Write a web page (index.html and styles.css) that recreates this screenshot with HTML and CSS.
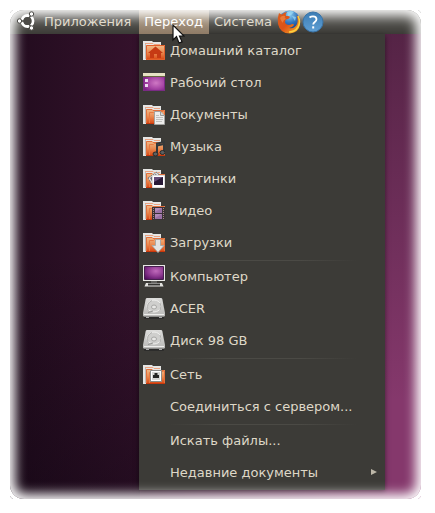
FILE: index.html
```html
<!DOCTYPE html>
<html lang="ru">
  <head>
    <meta charset="UTF-8">
    <meta name="viewport" content="width=device-width, initial-scale=1.0">
    <title>Переход</title>
    <link rel="stylesheet" href="styles.css">
  </head>
  <body>
    <!-- shared icon parts -->
    <svg class="defs" width="0" height="0" aria-hidden="true">
      <defs>
        <linearGradient id="orange" x1="0" y1="0" x2="0" y2="1">
          <stop offset="0" stop-color="#f0bd8c"/>
          <stop offset="0.5" stop-color="#ea8a50"/>
          <stop offset="1" stop-color="#d8440f"/>
        </linearGradient>
        <linearGradient id="metal" x1="0" y1="0" x2="0" y2="1">
          <stop offset="0" stop-color="#dcdcda"/>
          <stop offset="1" stop-color="#b9b9b7"/>
        </linearGradient>
        <radialGradient id="violet" cx="0.6" cy="0.5" r="0.7">
          <stop offset="0" stop-color="#cf78c4"/>
          <stop offset="0.6" stop-color="#a544a4"/>
          <stop offset="1" stop-color="#7d2485"/>
        </radialGradient>
        <radialGradient id="screen" cx="0.6" cy="0.35" r="0.8">
          <stop offset="0" stop-color="#c06abb"/>
          <stop offset="0.5" stop-color="#8f3a92"/>
          <stop offset="1" stop-color="#4f0d5c"/>
        </radialGradient>
        <linearGradient id="help" x1="0" y1="0" x2="0" y2="1">
          <stop offset="0" stop-color="#3c7cb4"/>
          <stop offset="1" stop-color="#5f9fd4"/>
        </linearGradient>
        <linearGradient id="fox" x1="0" y1="0" x2="1" y2="1">
          <stop offset="0" stop-color="#d9601f"/>
          <stop offset="0.5" stop-color="#dd5216"/>
          <stop offset="1" stop-color="#f6b62a"/>
        </linearGradient>
        <radialGradient id="globe" cx="0.5" cy="0.2" r="0.8">
          <stop offset="0" stop-color="#8fd0f0"/>
          <stop offset="0.5" stop-color="#2f73bd"/>
          <stop offset="1" stop-color="#172f76"/>
        </radialGradient>
        <symbol id="sheets" viewBox="0 0 22 22">
          <path d="M0 2h9l1 1h8v4H3v14H0z" fill="#e6e6e4"/>
          <path d="M2 4.500h8l1 1h6" fill="none" stroke="#eba482"/>
          <path d="M2.500 5v15" stroke="#bdbdba"/>
        </symbol>
        <symbol id="folder" viewBox="0 0 22 22">
          <use href="#sheets"/>
          <path d="M3 6h6l1 1h12v14H3z" fill="url(#orange)"/>
          <path d="M3.500 21V6.500h5.500l1 1h11.500V21" fill="none" stroke="#e2703c"/>
          <path d="M6.500 20V9.500h4l1-1h9" fill="none" stroke="#e77b42"/>
          <path d="M3 20.500h19" stroke="#c9380c"/>
        </symbol>
        <symbol id="disk" viewBox="0 0 22 22">
          <path d="M1 19h20v2q0 1-1 1H2q-1 0-1-1z" fill="#2c2c2b"/>
          <path d="M4 1h14q1 0 1.300 1L22 16v2.500q0 1-1 1H1q-1 0-1-1V16L2.700 2Q3 1 4 1z" fill="url(#metal)"/>
          <path d="M1 17.500h20" stroke="#eeeeec"/>
          <path d="M1 19.500h20" stroke="#8c8c8a"/>
          <ellipse cx="11" cy="9" rx="7" ry="6" fill="#cfcfcd" stroke="#efefed"/>
          <path d="M5 13Q3 6 9 3.500M17 13q2-4 0-7" fill="none" stroke="#b0b0ae"/>
          <ellipse cx="11" cy="10" rx="2.500" ry="2" fill="#e8e8e6" stroke="#a7a7a5"/>
          <path d="M5 15.500l5-1.500" stroke="#949492"/>
          <path d="M3 20.500h3M16 20.500h3" stroke="#aaa"/>
        </symbol>
      </defs>
    </svg>

    <div class="desktop">
      <nav class="panel">
        <button class="panel-item first">
          <svg class="logo" viewBox="0 0 20 20" aria-hidden="true">
            <circle cx="10.500" cy="10" r="5.500" fill="none" stroke="#fff" stroke-width="2.800"/>
            <path d="M10.500 10L1 10M10.500 10l5-9M10.500 10l5 9" stroke="#4c4b47" stroke-width="1.500"/>
            <circle cx="10.500" cy="10" r="4" fill="#4c4b47"/>
            <g fill="#fff" stroke="#4c4b47" stroke-width="1">
              <circle cx="2.500" cy="10" r="2.200"/>
              <circle cx="14.500" cy="3" r="2.200"/>
              <circle cx="14.500" cy="17" r="2.200"/>
            </g>
          </svg>
          Приложения
        </button>
        <button class="panel-item active">Переход
          <svg class="cursor" viewBox="0 0 13 21" aria-hidden="true">
            <path d="M1 1v15l3.500-3.500L7 19l3-1.200L7.500 12H12z" fill="#fff" stroke="#111" stroke-width="1.200"/>
          </svg>
        </button>
        <button class="panel-item">Система</button>
        <button class="launcher" aria-label="Firefox">
          <svg viewBox="0 0 24 24" aria-hidden="true">
            <circle cx="12.500" cy="11" r="10.500" fill="url(#globe)"/>
            <path d="M10 2q4-2 7 0l-3 3-3 1zM15 6l4 1-1 4z" fill="#9fdcf4" fill-opacity="0.700"/>
            <path d="M2 3q1 1 3 1.500Q7 2 10 2 8 4 9 6q3-.5 4 1-1 2-4 2.500Q7 12 9 14q3 2 6 0 2 0 2 1-2 3-5 3 6 1 8-4 1.500-4-.5-9 4 4 3.500 9-1 8.500-10 9.500Q3 23.500 1 14 0 8 2 3z" fill="url(#fox)"/>
            <path d="M21 6q3 6 0 11-3 5-9 5" fill="none" stroke="#fbd040" stroke-width="1.500"/>
            <path d="M3 8q2-3 5-2-1 2 1 3-3 1-3 4-2-2-3-5z" fill="#f08a48" fill-opacity="0.700"/>
          </svg>
        </button>
        <button class="launcher" aria-label="Справка">
          <svg viewBox="0 0 24 24" aria-hidden="true">
            <circle cx="12" cy="12" r="10" fill="url(#help)" stroke="#3a74a8"/>
            <path d="M8.500 7.500Q10 6.300 12 6.300q3.500 0 3.500 2.900 0 1.500-1.700 2.800-1.600 1.200-1.600 2.500" fill="none" stroke="#fff" stroke-width="1.800"/>
            <path d="M11.200 16.300h2v2.200h-2z" fill="#fff"/>
          </svg>
        </button>
      </nav>

      <ul class="menu">
        <li><button class="item">
          <svg viewBox="0 0 22 22" aria-hidden="true">
            <use href="#sheets"/>
            <path d="M3 6h19v15H3z" fill="url(#orange)"/>
            <path d="M3.500 6.500h18v14h-18z" fill="none" stroke="#e2602c"/>
            <path d="M12.500 7.500l7.500 6.500h-2v5h-4v-4h-3v4H7v-5H5z" fill="#c63a14"/>
          </svg>
          Домашний каталог
        </button></li>
        <li><button class="item">
          <svg viewBox="0 0 22 22" aria-hidden="true">
            <rect y="2" width="22" height="18" fill="#7a2c84"/>
            <rect x="1" y="5" width="20" height="14" fill="url(#violet)"/>
            <rect y="2" width="22" height="3" fill="#e6e2c4"/>
            <path d="M0 5.500h22" stroke="#66653f"/>
            <path d="M2 8h3v3H2zM2 13h3v3H2z" fill="#ecdcee"/>
          </svg>
          Рабочий стол
        </button></li>
        <li><button class="item">
          <svg viewBox="0 0 22 22" aria-hidden="true">
            <use href="#folder"/>
            <path d="M11.500 8.500h6l4 4v9h-10z" fill="#ededeb" stroke="#a3a3a0"/>
            <path d="M17.500 8.500v4h4" fill="#d6d6d4" stroke="#9b9b98"/>
            <path d="M13 12.500h3M13 14.500h7M13 16.500h7M13 18.500h6" stroke="#c0c0bd"/>
          </svg>
          Документы
        </button></li>
        <li><button class="item">
          <svg viewBox="0 0 22 22" aria-hidden="true">
            <use href="#folder"/>
            <path d="M14 18V8.500l7-1.500V17" fill="none" stroke="#34383a" stroke-width="2"/>
            <path d="M14 10.500l7-1.500" stroke="#34383a" stroke-width="2"/>
            <ellipse cx="12.500" cy="19" rx="2.500" ry="2" fill="#5b6062" stroke="#26292a"/>
            <ellipse cx="19.500" cy="17.500" rx="2.500" ry="2" fill="#5b6062" stroke="#26292a"/>
          </svg>
          Музыка
        </button></li>
        <li><button class="item">
          <svg viewBox="0 0 22 22" aria-hidden="true">
            <use href="#folder"/>
            <path d="M5 11l9-6 5 8-9 6z" fill="#e4e4e2" stroke="#777" stroke-dasharray="2 1"/>
            <path d="M7 11l6-4 3 5-6 4z" fill="#6c6673"/>
            <path d="M9.500 8.500h12v12h-12z" fill="#fff" stroke="#ddd"/>
            <path d="M11 10h9v8h-9z" fill="#291a37"/>
            <path d="M11 10h9l-9 5z" fill="#644b76"/>
          </svg>
          Картинки
        </button></li>
        <li><button class="item">
          <svg viewBox="0 0 22 22" aria-hidden="true">
            <use href="#folder"/>
            <path d="M9 8h13v13H9z" fill="#3a3236"/>
            <path d="M12 9h7v5h-7zM12 15h7v5h-7z" fill="#9b72a6"/>
            <path d="M12 9h7l-7 4zM12 15h7l-7 4z" fill="#b18bb8"/>
            <path d="M10.500 9v12M20.500 9v12" stroke="#a88a80" stroke-dasharray="1 1"/>
          </svg>
          Видео
        </button></li>
        <li><button class="item">
          <svg viewBox="0 0 22 22" aria-hidden="true">
            <use href="#folder"/>
            <path d="M12.500 8.500h5v6h3.500l-6 7-6-7h3.500z" fill="#e3e3e1" stroke="#aaaaa7"/>
          </svg>
          Загрузки
        </button></li>
        <li class="separator" role="separator"></li>
        <li><button class="item">
          <svg viewBox="0 0 22 22" aria-hidden="true">
            <path d="M0 0h22v16H0z" fill="#e8e8e5"/>
            <path d="M1.500 1.500h19v13h-19z" fill="url(#screen)" stroke="#47204f"/>
            <path d="M8 16h6v2H8z" fill="#62625f"/>
            <path d="M3 18h16l1.500 3.500h-19z" fill="#e2e2df"/>
            <path d="M5 19.500h12" stroke="#343432" stroke-width="2"/>
          </svg>
          Компьютер
        </button></li>
        <li><button class="item">
          <svg viewBox="0 0 22 22" aria-hidden="true"><use href="#disk"/></svg>
          ACER
        </button></li>
        <li><button class="item">
          <svg viewBox="0 0 22 22" aria-hidden="true"><use href="#disk"/></svg>
          Диск 98 GB
        </button></li>
        <li class="separator" role="separator"></li>
        <li><button class="item">
          <svg viewBox="0 0 22 22" aria-hidden="true">
            <use href="#folder"/>
            <path d="M7.500 7.500h11v11h-11z" fill="#fff" stroke="#8b8b88"/>
            <path d="M9 9h8v8H9z" fill="#d6d6d3"/>
            <path d="M10 15v-3h1.500v-2h3v2H16v3z" fill="#252523"/>
          </svg>
          Сеть
        </button></li>
        <li><button class="item no-icon">Соединиться с сервером...</button></li>
        <li class="separator" role="separator"></li>
        <li><button class="item no-icon">Искать файлы...</button></li>
        <li><button class="item no-icon" aria-haspopup="true">Недавние документы
          <svg class="arrow" viewBox="0 0 6 6" aria-hidden="true">
            <path d="M0 0l6 3-6 3z" fill="#bdb7a8"/>
          </svg>
        </button></li>
      </ul>
    </div>
  </body>
</html>
```
FILE: styles.css
```css
* {
  box-sizing: border-box;
}
body {
  margin: 0;
  padding: 10px 14px 14px 10px;
  background: #fff;
  font-family: "DejaVu Sans", Verdana, sans-serif;
  font-size: 13px;
}
.defs {
  position: absolute;
}
.desktop {
  position: relative;
  padding-bottom: 9px;
  background: linear-gradient(to top, rgba(10, 4, 14, 0.4), rgba(10, 4, 14, 0) 50%) left / 130px 100% no-repeat,
    linear-gradient(to bottom, rgba(48, 20, 40, 0.6), rgba(48, 20, 40, 0) 80%) right / 36px 100% no-repeat,
    linear-gradient(to right, #220c1e, #35122c 32%, #85386c 92%, #85386c);
}
/* soft white edge over everything */
.desktop::after {
  content: "";
  position: absolute;
  inset: -4px;
  border: 4px solid #fff;
  border-radius: 18px;
  outline: 8px solid #fff;
  box-shadow: inset 0 0 12px 5px #fff;
  pointer-events: none;
}
button {
  margin: 0;
  border: 0;
  background: none;
  color: #dfd8c8;
  font: inherit;
  white-space: nowrap;
  cursor: default;
}
.panel {
  display: flex;
  height: 24px;
  padding-left: 2px;
  background: linear-gradient(#6c6b66, #3c3b37);
}
.panel-item {
  position: relative;
  display: flex;
  align-items: center;
  padding: 0 5px 2px;
}
.panel-item.first {
  gap: 7px;
  padding-right: 8px;
}
.logo {
  position: relative;
  z-index: 1;
  width: 20px;
  height: 20px;
}
.panel-item.active {
  padding-right: 6px;
  background: linear-gradient(#b5a794, #8f7b66);
  color: #fff;
}
.cursor {
  position: absolute;
  top: 14px;
  left: 33px;
  width: 13px;
  height: 21px;
}
.launcher {
  position: relative;
  z-index: 1;
  display: flex;
  align-items: center;
  padding: 0;
}
.launcher svg {
  width: 24px;
  height: 24px;
}
.menu {
  width: 246px;
  margin: 0 0 0 129px;
  padding: 1px 0;
  list-style: none;
  background: #3c3b37;
  box-shadow: 0 2px 5px rgba(0, 0, 0, 0.5);
}
.item {
  display: flex;
  align-items: center;
  gap: 5px;
  width: 100%;
  height: 32px;
  padding: 0 8px 2px 4px;
  text-align: left;
}
.item svg {
  width: 22px;
  height: 22px;
}
.no-icon {
  padding-left: 31px;
}
.item .arrow {
  width: 6px;
  height: 6px;
  margin-left: auto;
}
.separator {
  height: 2px;
  margin: 0 28px;
  background: linear-gradient(to right, #3c3b37, #4b4a45 30%, #4b4a45 70%, #3c3b37) bottom / 100% 1px no-repeat;
}
.item:hover {
  background: #5a5148;
}
```
